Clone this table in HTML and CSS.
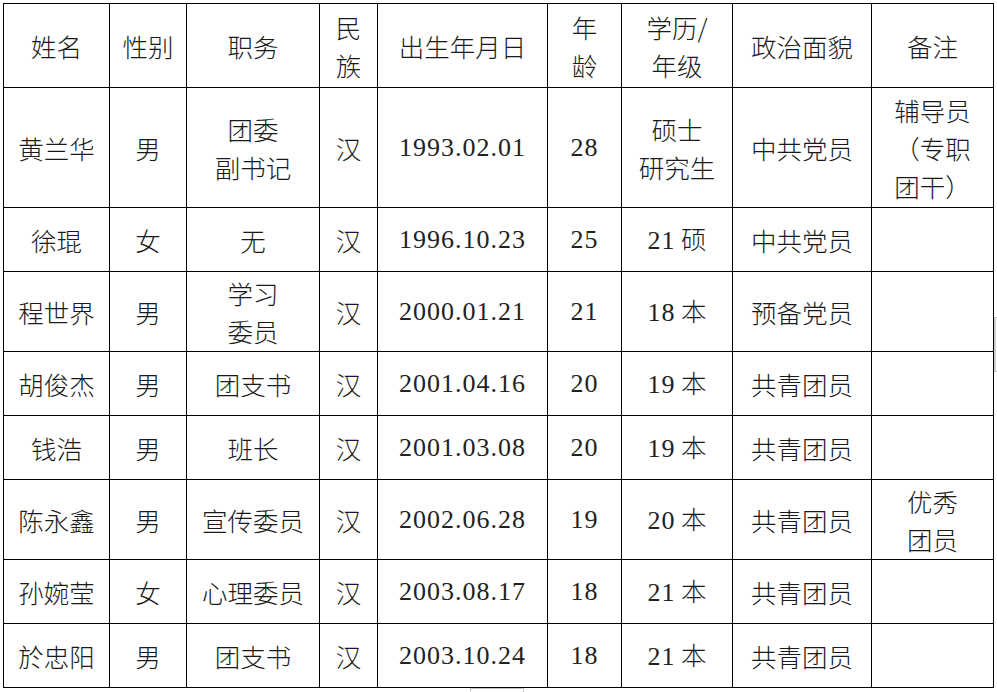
FILE: index.html
```html
<!DOCTYPE html>
<html lang="zh-CN">
<head>
<meta charset="utf-8">
<title>名单</title>
<link rel="stylesheet" href="styles.css">
</head>
<body>
<table class="roster">
  <colgroup>
    <col class="c-name"><col class="c-sex"><col class="c-duty"><col class="c-nation"><col class="c-birth"><col class="c-age"><col class="c-edu"><col class="c-pol"><col class="c-note">
  </colgroup>
  <tr class="r-head">
    <td>姓名</td><td>性别</td><td>职务</td><td>民<br>族</td><td>出生年月日</td><td>年<br>龄</td><td>学历/<br>年级</td><td>政治面貌</td><td>备注</td>
  </tr>
  <tr class="r-tall">
    <td>黄兰华</td><td>男</td><td>团委<br>副书记</td><td>汉</td><td class="num">1993.02.01</td><td class="num">28</td><td>硕士<br>研究生</td><td>中共党员</td><td><span class="left">辅导员<br>（专职<br>团干）</span></td>
  </tr>
  <tr class="r-one">
    <td>徐琨</td><td>女</td><td>无</td><td>汉</td><td class="num">1996.10.23</td><td class="num">25</td><td><span class="num">21</span> 硕</td><td>中共党员</td><td></td>
  </tr>
  <tr class="r-two">
    <td>程世界</td><td>男</td><td>学习<br>委员</td><td>汉</td><td class="num">2000.01.21</td><td class="num">21</td><td><span class="num">18</span> 本</td><td>预备党员</td><td></td>
  </tr>
  <tr class="r-one">
    <td>胡俊杰</td><td>男</td><td>团支书</td><td>汉</td><td class="num">2001.04.16</td><td class="num">20</td><td><span class="num">19</span> 本</td><td>共青团员</td><td></td>
  </tr>
  <tr class="r-one">
    <td>钱浩</td><td>男</td><td>班长</td><td>汉</td><td class="num">2001.03.08</td><td class="num">20</td><td><span class="num">19</span> 本</td><td>共青团员</td><td></td>
  </tr>
  <tr class="r-two">
    <td>陈永鑫</td><td>男</td><td>宣传委员</td><td>汉</td><td class="num">2002.06.28</td><td class="num">19</td><td><span class="num">20</span> 本</td><td>共青团员</td><td>优秀<br>团员</td>
  </tr>
  <tr class="r-one">
    <td>孙婉莹</td><td>女</td><td>心理委员</td><td>汉</td><td class="num">2003.08.17</td><td class="num">18</td><td><span class="num">21</span> 本</td><td>共青团员</td><td></td>
  </tr>
  <tr class="r-one">
    <td>於忠阳</td><td>男</td><td>团支书</td><td>汉</td><td class="num">2003.10.24</td><td class="num">18</td><td><span class="num">21</span> 本</td><td>共青团员</td><td></td>
  </tr>
</table>
<div class="mark-bottom"></div>
<div class="mark-right"></div>
</body>
</html>
```

FILE: styles.css
```css
html, body {
  margin: 0;
  padding: 0;
  background: #ffffff;
}
body {
  padding: 3px 0 0 3px;
  font-family: "Liberation Serif", "Noto Sans CJK SC", serif;
  color: #1a1a1a;
}
.roster {
  border-collapse: collapse;
  table-layout: fixed;
  width: 990px;
  font-size: 25.5px;
  line-height: 38px;
}
.roster td {
  border: 1.5px solid #000;
  padding: 0;
  text-align: center;
  vertical-align: middle;
  font-family: "Noto Sans CJK SC", sans-serif;
  font-weight: 300;
}
.roster td.num, .roster .num {
  font-family: "Liberation Serif", serif;
  font-weight: 400;
  font-size: 26px;
  letter-spacing: 1px;
  color: #222;
}
.c-name { width: 106px; }
.c-sex { width: 77px; }
.c-duty { width: 133px; }
.c-nation { width: 58px; }
.c-birth { width: 170px; }
.c-age { width: 74px; }
.c-edu { width: 111px; }
.c-pol { width: 139px; }
.c-note { width: 122px; }
.r-head { height: 84px; }
.r-tall { height: 120px; }
.r-one { height: 64px; }
.r-two { height: 80px; }
.left {
  display: inline-block;
  text-align: left;
}
.mark-bottom {
  position: absolute;
  left: 470px;
  top: 688px;
  width: 54px;
  height: 8px;
  border: 1px solid #c8c8c8;
  border-bottom: none;
  box-sizing: border-box;
}
.mark-right {
  position: absolute;
  left: 994px;
  top: 317px;
  width: 4px;
  height: 55px;
  border-left: 2px solid #d0d0d0;
  border-top: 1px solid #c0c0c0;
  border-bottom: 1px solid #c0c0c0;
  box-sizing: border-box;
}
```
